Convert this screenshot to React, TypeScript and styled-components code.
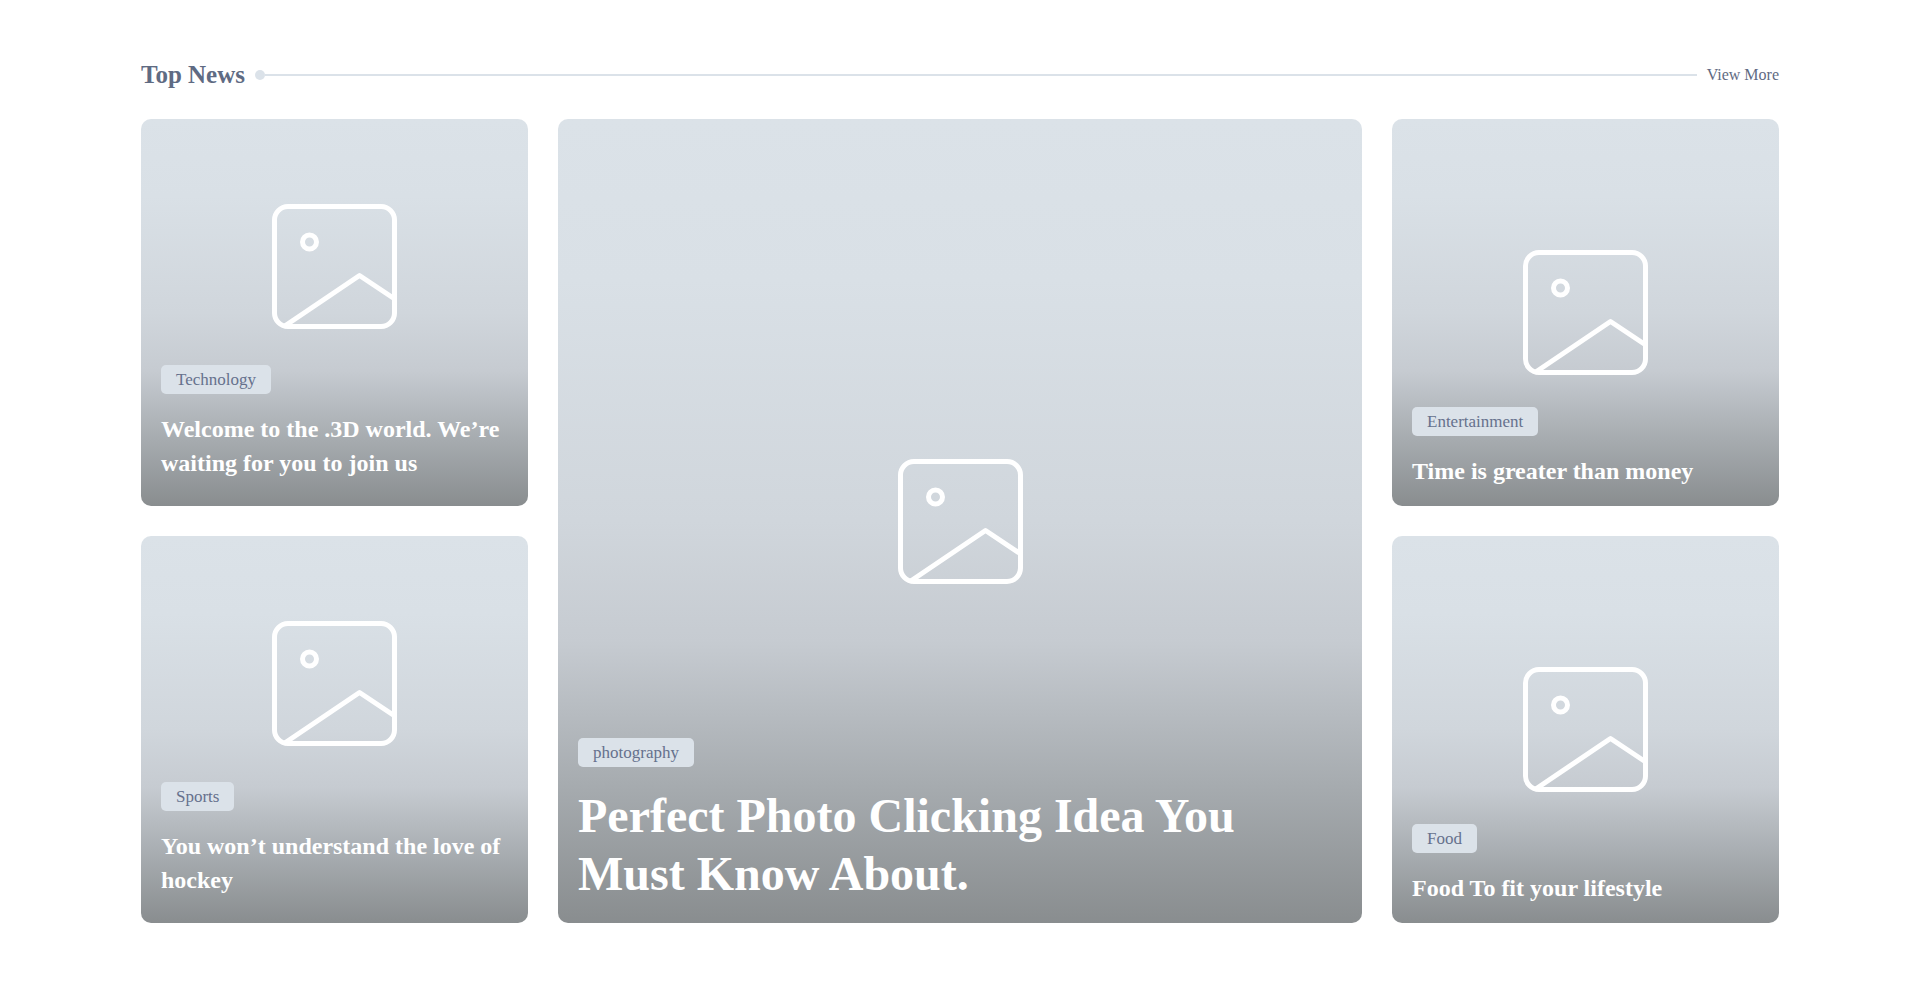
import React from "react";
import styled, { createGlobalStyle } from "styled-components";

const GlobalStyle = createGlobalStyle`
  *, *::before, *::after {
    box-sizing: border-box;
  }

  body {
    margin: 0;
    background: #ffffff;
    color: #5f6b83;
    font-family: "Liberation Serif", serif;
  }
`;

const Section = styled.section`
  width: 100%;
  max-width: 1678px;
  margin: 0 auto;
  padding: 58px 20px 60px;
`;

const Header = styled.header`
  display: flex;
  align-items: center;
  gap: 10px;
  margin-bottom: 27px;
`;

const SectionTitle = styled.h2`
  margin: 0;
  font-size: 25px;
  line-height: 34px;
  font-weight: 700;
`;

const Rule = styled.div`
  flex: 1;
  display: flex;
  align-items: center;

  &::before {
    content: "";
    width: 10px;
    height: 10px;
    border-radius: 50%;
    background: #dbe2e9;
  }

  &::after {
    content: "";
    flex: 1;
    height: 2px;
    background: #dbe2e9;
  }
`;

const MoreLink = styled.a`
  color: inherit;
  font-size: 16px;
  line-height: 34px;
  text-decoration: none;
`;

const Grid = styled.div`
  display: grid;
  grid-template-columns: repeat(4, minmax(0, 1fr));
  gap: 30px;

  @media (max-width: 1100px) {
    grid-template-columns: repeat(2, minmax(0, 1fr));
  }
`;

type Place = "left" | "feature" | "right";

const bottomSpace: Record<Place, string> = {
  left: "26px",
  feature: "20px",
  right: "18px",
};

const Card = styled.article<{ $place: Place }>`
  display: grid;
  aspect-ratio: 1;
  grid-row: ${({ $place }) => ($place === "feature" ? "1 / span 2" : "auto")};
  grid-column: ${({ $place }) => ($place === "feature" ? "2 / span 2" : "auto")};
  border-radius: 10px;
  overflow: hidden;
  background: linear-gradient(
    180deg,
    #dbe2e8 0%,
    #d9e0e6 20%,
    #d0d6dc 50%,
    #c6cbd1 65%,
    #a6abaf 83%,
    #898d8f 100%
  );

  @media (max-width: 1100px) {
    grid-column: ${({ $place }) => ($place === "feature" ? "1 / span 2" : "auto")};
  }
`;

const Picture = styled.div<{ $place: Place }>`
  grid-area: 1 / 1;
  display: flex;
  align-items: center;
  justify-content: center;
  padding-bottom: ${({ $place }) => ($place === "left" ? "92px" : "0")};
`;

const Content = styled.div<{ $place: Place }>`
  grid-area: 1 / 1;
  display: flex;
  flex-direction: column;
  align-items: flex-start;
  justify-content: flex-end;
  gap: ${({ $place }) => ($place === "feature" ? "20px" : "18px")};
  padding: 20px 20px ${({ $place }) => bottomSpace[$place]};
`;

const Tag = styled.a`
  padding: 0 15px;
  border-radius: 5px;
  background: #dbe2e9;
  color: #66718d;
  font-size: 17px;
  line-height: 29px;
  text-decoration: none;
`;

const Headline = styled.h3<{ $place: Place }>`
  margin: 0;
  color: #ffffff;
  font-size: ${({ $place }) => ($place === "feature" ? "48px" : "24px")};
  line-height: ${({ $place }) => ($place === "feature" ? "58px" : "34px")};
  font-weight: 700;
`;

const PlaceholderIcon = () => (
  <svg
    width="125"
    height="125"
    viewBox="0 0 125 125"
    fill="none"
    stroke="#ffffff"
    strokeWidth="5"
    aria-hidden="true"
  >
    <rect x="2.5" y="2.5" width="120" height="120" rx="13.5" />
    <circle cx="37.5" cy="38" r="7" />
    <path d="M12 122.5 L87.5 71.5 L122 94.5" strokeLinejoin="round" />
  </svg>
);

interface Story {
  tag: string;
  title: string;
  place: Place;
}

const stories: Story[] = [
  { tag: "Technology", title: "Welcome to the .3D world. We’re waiting for you to join us", place: "left" },
  {
    tag: "photography",
    title: "Perfect Photo Clicking Idea You Must Know About.",
    place: "feature",
  },
  { tag: "Entertainment", title: "Time is greater than money", place: "right" },
  { tag: "Sports", title: "You won’t understand the love of hockey", place: "left" },
  { tag: "Food", title: "Food To fit your lifestyle", place: "right" },
];

const StoryCard = ({ tag, title, place }: Story) => (
  <Card $place={place}>
    <Picture $place={place}>
      <PlaceholderIcon />
    </Picture>
    <Content $place={place}>
      <Tag href="#">{tag}</Tag>
      <Headline $place={place}>{title}</Headline>
    </Content>
  </Card>
);

export default function App() {
  return (
    <>
      <GlobalStyle />
      <Section>
        <Header>
          <SectionTitle>Top News</SectionTitle>
          <Rule />
          <MoreLink href="#">View More</MoreLink>
        </Header>
        <Grid>
          {stories.map((story) => (
            <StoryCard key={story.tag} {...story} />
          ))}
        </Grid>
      </Section>
    </>
  );
}
